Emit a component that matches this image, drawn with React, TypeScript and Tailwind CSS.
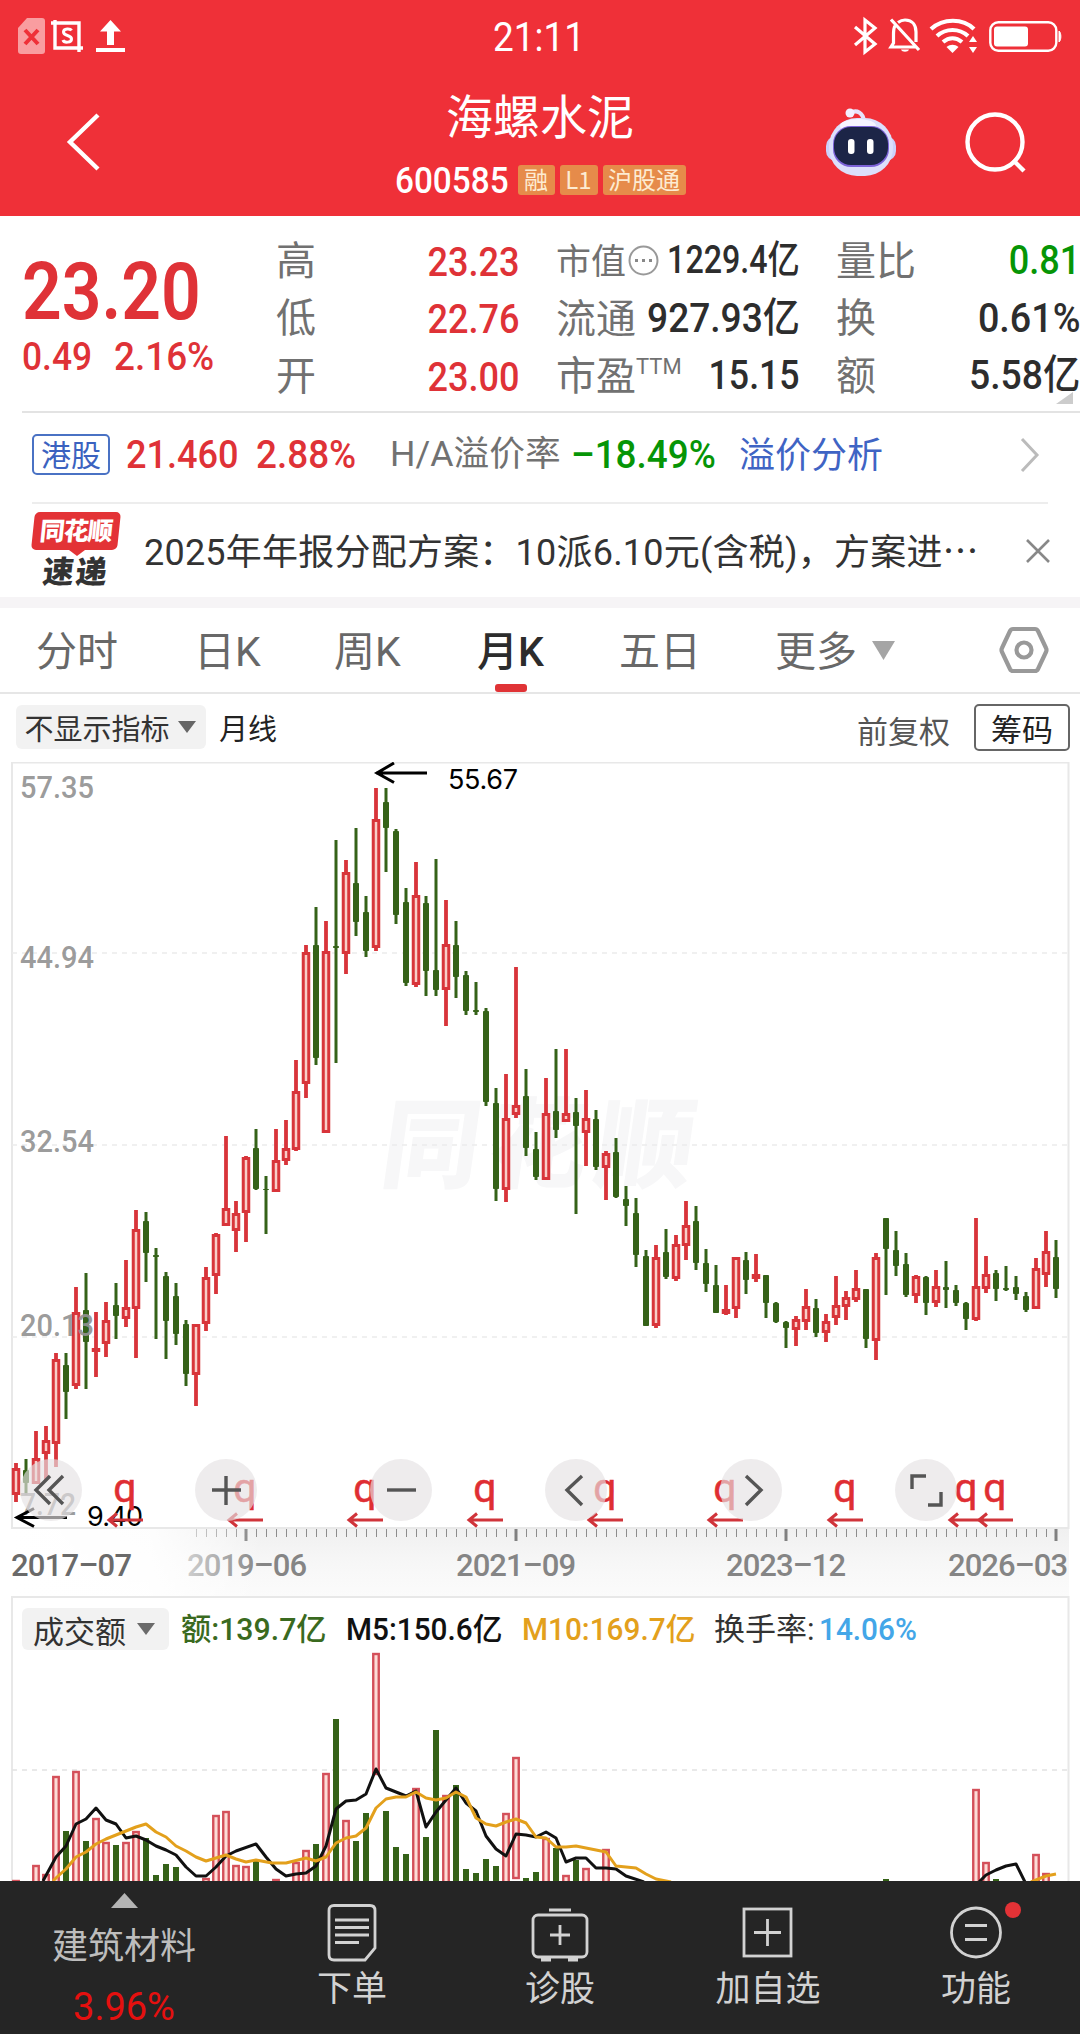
import type { ReactNode } from 'react';

// [rising, high, body top, body bottom, low] in chart units, one entry per month
const CANDLES = [
  [1, 1463, 1468, 1495, 1502], [0, 1459, 1470, 1483, 1495], [1, 1431, 1458, 1484, 1484], [1, 1426, 1440, 1454, 1480],
  [1, 1353, 1359, 1444, 1467], [0, 1353, 1365, 1392, 1419], [1, 1287, 1312, 1386, 1389], [0, 1273, 1310, 1342, 1389],
  [1, 1312, 1348, 1350, 1377], [1, 1302, 1320, 1344, 1357], [0, 1283, 1305, 1316, 1339], [1, 1260, 1307, 1319, 1327],
  [1, 1210, 1229, 1309, 1358], [0, 1212, 1221, 1253, 1282], [0, 1248, 1255, 1257, 1339], [0, 1272, 1276, 1321, 1359],
  [0, 1283, 1296, 1334, 1345], [0, 1320, 1324, 1374, 1386], [1, 1324, 1324, 1375, 1406], [1, 1267, 1277, 1324, 1331],
  [1, 1233, 1234, 1276, 1294], [1, 1136, 1208, 1226, 1226], [1, 1201, 1213, 1231, 1252], [1, 1156, 1157, 1213, 1242],
  [0, 1129, 1148, 1189, 1190], [0, 1176, 1189, 1190, 1234], [1, 1129, 1160, 1192, 1192], [1, 1120, 1148, 1161, 1165],
  [1, 1060, 1091, 1150, 1151], [1, 945, 952, 1084, 1098], [0, 907, 945, 1058, 1065], [1, 921, 951, 1133, 1133],
  [0, 840, 946, 948, 1063], [1, 860, 872, 954, 974], [0, 828, 883, 922, 936], [0, 896, 912, 951, 957],
  [1, 788, 819, 948, 951], [0, 788, 802, 828, 872], [0, 829, 831, 915, 924], [0, 888, 902, 983, 986],
  [1, 862, 895, 985, 987], [0, 896, 903, 971, 996], [0, 859, 970, 990, 996], [1, 900, 944, 990, 1026],
  [0, 921, 945, 977, 998], [0, 971, 975, 1011, 1015], [0, 982, 1010, 1012, 1015], [0, 1008, 1011, 1102, 1106],
  [0, 1088, 1103, 1189, 1201], [1, 1074, 1118, 1190, 1202], [1, 967, 1105, 1115, 1118], [0, 1069, 1096, 1148, 1156],
  [0, 1132, 1149, 1177, 1180], [1, 1078, 1113, 1180, 1180], [0, 1049, 1111, 1130, 1138], [1, 1049, 1113, 1122, 1122],
  [0, 1098, 1112, 1126, 1214], [1, 1090, 1118, 1133, 1166], [0, 1110, 1119, 1167, 1170], [1, 1151, 1153, 1168, 1200],
  [0, 1138, 1152, 1197, 1198], [0, 1186, 1199, 1206, 1226], [0, 1198, 1213, 1255, 1267], [0, 1250, 1256, 1326, 1326],
  [1, 1245, 1257, 1326, 1328], [0, 1229, 1252, 1277, 1279], [1, 1235, 1244, 1279, 1281], [1, 1201, 1225, 1246, 1260],
  [0, 1206, 1221, 1263, 1270], [0, 1249, 1263, 1284, 1292], [0, 1265, 1285, 1313, 1313], [1, 1285, 1309, 1314, 1315],
  [1, 1257, 1257, 1309, 1318], [0, 1252, 1260, 1280, 1294], [1, 1254, 1274, 1279, 1282], [0, 1275, 1275, 1303, 1318],
  [0, 1302, 1303, 1322, 1323], [0, 1321, 1322, 1328, 1348], [1, 1316, 1319, 1330, 1346], [1, 1289, 1306, 1322, 1330],
  [0, 1299, 1308, 1333, 1337], [1, 1314, 1321, 1333, 1342], [1, 1276, 1305, 1318, 1325], [1, 1291, 1297, 1307, 1320],
  [1, 1270, 1288, 1300, 1302], [0, 1289, 1289, 1339, 1348], [1, 1253, 1257, 1341, 1360], [0, 1218, 1218, 1249, 1295],
  [0, 1231, 1250, 1266, 1276], [0, 1253, 1264, 1295, 1297], [1, 1275, 1276, 1296, 1303], [0, 1276, 1277, 1303, 1315],
  [1, 1270, 1286, 1303, 1307], [0, 1261, 1287, 1290, 1308], [0, 1285, 1290, 1303, 1306], [0, 1302, 1303, 1319, 1330],
  [1, 1218, 1286, 1320, 1321], [1, 1256, 1274, 1289, 1293], [0, 1270, 1273, 1289, 1301], [0, 1266, 1288, 1290, 1291],
  [0, 1276, 1287, 1294, 1300], [0, 1292, 1296, 1310, 1312], [1, 1258, 1268, 1309, 1309], [1, 1231, 1251, 1275, 1287],
  [0, 1240, 1257, 1289, 1298],
];

// [month index, bar top]; colour follows the candle
const VOLUMES = [
  [0, 1880], [2, 1865], [3, 1874], [4, 1776], [5, 1831], [6, 1771], [7, 1841], [8, 1818], [9, 1842], [10, 1845],
  [11, 1842], [12, 1831], [13, 1838], [14, 1875], [15, 1864], [16, 1867], [19, 1878], [20, 1815], [21, 1811],
  [22, 1865], [23, 1866], [24, 1860], [26, 1879], [28, 1862], [29, 1850], [30, 1844], [31, 1773], [32, 1719],
  [33, 1820], [34, 1841], [35, 1813], [36, 1653], [37, 1811], [38, 1847], [39, 1854], [40, 1788], [41, 1837],
  [42, 1730], [43, 1795], [44, 1785], [45, 1869], [46, 1873], [47, 1859], [48, 1866], [49, 1813], [50, 1757],
  [51, 1878], [52, 1872], [53, 1838], [54, 1848], [55, 1875], [56, 1860], [57, 1868], [59, 1849], [87, 1879],
  [96, 1789], [97, 1862], [98, 1879], [102, 1854], [103, 1873],
];

const M5 =
  '43,1881 56,1857 66,1846 76,1824 86,1819 96,1808 106,1820 116,1824 126,1838 136,1836 146,1840 156,1846 166,1850 176,1855 186,1867 196,1876 206,1876 216,1867 226,1856 236,1851 256,1844 266,1857 276,1869 286,1876 296,1874 306,1873 316,1866 326,1846 336,1809 346,1801 356,1800 366,1794 376,1769 386,1788 396,1792 406,1796 416,1791 426,1827 436,1812 456,1788 466,1803 476,1811 486,1836 496,1849 506,1856 516,1834 526,1835 536,1837 546,1832 556,1838 566,1862 576,1858 586,1858 596,1868 606,1868 616,1869 626,1876 644,1882';
const M10 =
  '53,1881 57,1877 66,1869 76,1857 86,1852 96,1844 106,1839 116,1835 136,1827 146,1824 156,1832 166,1837 176,1846 186,1851 196,1857 206,1861 216,1858 226,1855 236,1859 246,1862 256,1860 272,1863 286,1863 306,1858 316,1861 326,1857 336,1843 346,1838 356,1836 366,1828 376,1808 386,1799 396,1797 406,1797 416,1792 426,1798 436,1800 446,1798 456,1792 466,1797 476,1818 486,1824 496,1826 506,1822 516,1819 526,1823 536,1837 546,1838 556,1847 566,1847 576,1846 586,1848 606,1852 616,1866 636,1868 646,1874 656,1879 671,1882';

const DIVIDENDS = [125, 245, 365, 485, 605, 725, 845, 966, 995];
const RED = '#d8343a';
const GREEN = '#356218';

function Num({ children, className = '' }: { children: ReactNode; className?: string }) {
  return (
    <span className={`inline-block shrink-0 whitespace-nowrap font-['Roboto','Noto_Sans_CJK_SC',sans-serif] ${className}`}>
      {children}
    </span>
  );
}

function StatusBar() {
  return (
    <div className="flex h-[72px] items-center justify-between pl-[18px] pr-[19px] text-white">
      <div className="flex w-[220px] items-center">
        <svg className="h-9 w-[27px]" viewBox="0 0 27 36">
          <path d="M9 0h15a3 3 0 013 3v30a3 3 0 01-3 3H3a3 3 0 01-3-3V10z" fill="#f99da0" />
          <path d="M7 12l13 14M20 12L7 26" stroke="#ef3038" strokeWidth="4" />
        </svg>
        <svg className="ml-1.5 h-8 w-8" viewBox="0 0 32 32" fill="none" stroke="#fff" strokeWidth="3.400">
          <path d="M0 3h28v29M4 0v28h28" />
          <path d="M20.500 10.500c-1-2-8-2.500-8 1.500 0 4.500 8 2.500 8 7 0 4-7.500 4-8.500 1" strokeWidth="3" />
        </svg>
        <svg className="ml-[13px] h-8 w-[29px]" viewBox="0 0 29 32" fill="#fff">
          <path d="M14.500 0L25 11.500h-7V25h-7V11.500H4zM0 28h29v4H0z" />
        </svg>
      </div>
      <Num className="scale-x-[0.9] pt-[3px] text-[41px] leading-none">21:11</Num>
      <div className="flex w-[220px] items-center justify-end">
        <svg className="h-[36px] w-6" viewBox="0 0 24 36" fill="none" stroke="#fff" strokeWidth="3.200">
          <path d="M2 9l20 17-10 8V2l10 8L2 27" />
        </svg>
        <svg className="ml-3 h-9 w-[32px]" viewBox="0 0 32 36" fill="none" stroke="#fff" strokeWidth="3.200">
          <path d="M6 8C4.500 10 4.500 13 4.500 17v8L2 29h25M9 4.500C11 3 13 2 16 2c8 0 11 6 11 12v10M2 1.500L30 32" />
          <path d="M12 31.500h8c-1 3-7 3-8 0z" fill="#fff" stroke="none" />
        </svg>
        <svg className="ml-2 h-[34px] w-12" viewBox="0 0 48 34" fill="none" stroke="#fff" strokeWidth="4.200">
          <path d="M2 10c12-11 32-11 43 0M8 17c9-8 22-8 31 0M14 23c6-5 13-5 19 0" />
          <path d="M17.500 28c4-3 8-3 12 0L23.500 34z" fill="#fff" stroke="none" />
          <path d="M44 17l4 6h-8zM44 34l4-6h-8z" fill="#fff" stroke="none" />
        </svg>
        <svg className="ml-3 h-[31px] w-[72px]" viewBox="0 0 72 31">
          <rect x="1.300" y="1.300" width="66" height="28.400" rx="8" fill="none" stroke="#fff" strokeWidth="2.400" />
          <rect x="5" y="5.500" width="34" height="20" rx="3" fill="#fff" />
          <path d="M70 10c2.500 2 2.500 9 0 11z" fill="#fff" stroke="#fff" />
        </svg>
      </div>
    </div>
  );
}

function Badge({ children, className }: { children: ReactNode; className: string }) {
  return (
    <span className={`flex h-[30px] items-center justify-center rounded-[3px] bg-[#e68b4a] pb-[2px] text-[24px] leading-none text-[#fdebd2] ${className}`}>
      {children}
    </span>
  );
}

function Header() {
  return (
    <header className="h-[216px] bg-[#ef3038] text-white">
      <StatusBar />
      <div className="flex h-[144px] justify-between">
        <div className="w-[395px] pl-[66px] pt-[41px]">
          <svg className="h-[58px] w-[34px]" viewBox="0 0 34 58" fill="none" stroke="#fff" strokeWidth="4.400">
            <path d="M32 2L4 29l28 27" />
          </svg>
        </div>
        <div className="flex flex-col items-center pt-[17px]">
          <div className="text-[47px] leading-[50px]">海螺水泥</div>
          <div className="mt-[25px] flex h-[32px] items-center">
            <Num className="w-[123px] origin-left scale-x-[0.9] text-[37px] font-medium leading-none">600585</Num>
            <Badge className="w-[37px]">融</Badge>
            <Badge className="ml-[5px] w-[38px]">L1</Badge>
            <Badge className="ml-[5px] w-[83px]">沪股通</Badge>
          </div>
        </div>
        <div className="flex w-[395px] justify-end pr-[53px] pt-[36px]">
          <svg className="h-[68px] w-[72px]" viewBox="0 0 72 68">
            <path d="M25 5c7-4 13 0 14 8" fill="none" stroke="#e6e2fb" strokeWidth="4" />
            <circle cx="25" cy="5" r="4.500" fill="#f3efff" />
            <rect x="1" y="28" width="70" height="25" rx="10" fill="#ccd0fa" />
            <rect x="4" y="10" width="64" height="58" rx="28" fill="#dcdffb" />
            <ellipse cx="33" cy="18" rx="18" ry="7" fill="#f6f4ff" />
            <rect x="8" y="18" width="56" height="41" rx="18" fill="#7c62d8" />
            <rect x="9" y="19" width="54" height="38" rx="17" fill="#1c2547" />
            <rect x="23" y="31" width="6.500" height="15" rx="3" fill="#fff" />
            <rect x="42" y="31" width="6.500" height="15" rx="3" fill="#fff" />
          </svg>
          <svg className="ml-[68px] mt-[5px] h-[60px] w-[62px]" viewBox="0 0 62 60" fill="none" stroke="#fff" strokeWidth="4.400">
            <circle cx="30" cy="29" r="27.500" />
            <path d="M48 47l11 11" />
          </svg>
        </div>
      </div>
    </header>
  );
}

function QuoteRow({ cells }: { cells: ReactNode[] }) {
  return (
    <div className="flex h-[57.500px] items-center text-[40px] leading-none text-[#717171]">
      <div className="w-10 pb-[6px]">{cells[0]}</div>
      <div className="w-[204px] text-right">{cells[1]}</div>
      <div className="ml-[36px] flex w-[122px] items-center whitespace-nowrap pb-[5px]">{cells[2]}</div>
      <div className="flex w-[122px] justify-end">{cells[3]}</div>
      <div className="ml-[36px] w-[90px] pb-[6px]">{cells[4]}</div>
      <div className="flex flex-1 justify-end">{cells[5]}</div>
    </div>
  );
}

function Quote() {
  const num = 'origin-right text-[41px] font-medium';
  return (
    <section className="relative flex h-[195px] pt-[16px]">
      <div className="w-[276px] pl-[22px] pt-[20px] text-[#df3237]">
        <Num className="block origin-left scale-x-[0.87] text-[80px] font-semibold leading-[80px]">23.20</Num>
        <div className="mt-[4px] flex text-[38px] leading-[42px]">
          <Num className="w-[92px] origin-left scale-x-[0.93] font-medium">0.49</Num>
          <Num className="origin-left scale-x-[0.97] font-medium">2.16%</Num>
        </div>
      </div>
      <div className="flex-1">
        <QuoteRow cells={['高', <Num className={`${num} scale-x-[0.88] text-[#df3237]`}>23.23</Num>,
          <><span className="text-[35px]">市值</span>
            <svg className="ml-0.5 mt-1 h-[31px] w-[31px]" viewBox="0 0 31 31"><circle cx="15.500" cy="15.500" r="14" fill="none" stroke="#999" strokeWidth="2" /><path d="M7 14h3v3H7zM14 14h3v3h-3zM21 14h3v3h-3z" fill="#888" /></svg></>,
          <Num className="origin-right scale-x-[0.825] text-[39px] font-medium text-[#2d2d2d]">1229.4亿</Num>, '量比',
          <Num className={`${num} scale-x-[0.88] text-[#069506]`}>0.81</Num>]} />
        <QuoteRow cells={['低', <Num className={`${num} scale-x-[0.88] text-[#df3237]`}>22.76</Num>, '流通',
          <Num className={`${num} scale-x-[0.905] text-[#2d2d2d]`}>927.93亿</Num>, '换', <Num className={`${num} scale-x-[0.92] text-[#2d2d2d]`}>0.61%</Num>]} />
        <QuoteRow cells={['开', <Num className={`${num} scale-x-[0.88] text-[#df3237]`}>23.00</Num>,
          <>市盈<Num className="self-start pt-[3px] text-[22px]">TTM</Num></>,
          <Num className={`${num} scale-x-[0.87] text-[#2d2d2d]`}>15.15</Num>, '额', <Num className={`${num} scale-x-[0.91] text-[#2d2d2d]`}>5.58亿</Num>]} />
      </div>
      <svg className="absolute bottom-[7px] right-[7px] h-3 w-[17px]" viewBox="0 0 17 12"><path d="M17 0v12H0z" fill="#ccc" /></svg>
    </section>
  );
}

function HkRow() {
  return (
    <section className="mx-8 flex h-[91px] items-center border-b-2 border-[#ededed] pb-[6px] text-[35px] leading-none">
      <span className="flex h-[41px] w-[78px] items-center justify-center rounded-[5px] border-2 border-[#4a72c4] pb-[4px] text-[30px] text-[#3b62c0]">港股</span>
      <Num className="ml-[16px] w-[130px] origin-left scale-x-[0.95] text-[38px] font-medium text-[#df3237]">21.460</Num>
      <Num className="w-[134px] origin-left scale-x-[0.97] text-[38px] font-medium text-[#df3237]">2.88%</Num>
      <Num className="w-[181px] origin-left scale-x-[1.02] text-[35px] text-[#717171]">H/A溢价率</Num>
      <Num className="w-[168px] origin-left scale-x-[0.97] text-[38px] font-medium text-[#069506]">–18.49%</Num>
      <span className="pb-[5px] text-[36px] text-[#3f64c4]">溢价分析</span>
      <svg className="ml-auto mr-[8px] h-9 w-5" viewBox="0 0 20 36" fill="none" stroke="#bbb" strokeWidth="3"><path d="M2 2l15 16L2 34" /></svg>
    </section>
  );
}

function NewsRow() {
  return (
    <section className="flex h-[93px] items-center pl-[33px] pr-[30px]">
      <div className="flex w-[111px] flex-col pb-[5px]">
        <span className="flex h-[38px] w-[86px] -skew-x-6 items-center justify-center rounded-[5px] bg-[#e33336] pb-[3px] text-[25px] font-black leading-none tracking-[-1px] text-white">同花顺</span>
        <svg className="ml-9 h-[6px] w-4" viewBox="0 0 16 6"><path d="M0 0h16L8 6z" fill="#e33336" /></svg>
        <span className="ml-[10px] -skew-x-6 text-[31px] font-black leading-[28px] tracking-[2px] text-[#333]">速递</span>
      </div>
      <p className="flex-1 overflow-hidden whitespace-nowrap font-['Roboto','Noto_Sans_CJK_SC',sans-serif] text-[36px] tracking-[0.22px] text-[#333]">
        2025年年报分配方案：10派6.10元(含税)，方案进<span className="font-['Noto_Sans_CJK_SC',sans-serif]">⋯</span>
      </p>
      <svg className="h-6 w-6" viewBox="0 0 24 24" stroke="#888" strokeWidth="2.600"><path d="M1 1l22 22M23 1L1 23" /></svg>
    </section>
  );
}

function Tabs() {
  return (
    <nav className="flex h-[86px] items-center border-b-2 border-[#e6e6e6] pl-[36px] pr-[31px] font-['Roboto','Noto_Sans_CJK_SC',sans-serif] text-[41px] leading-none text-[#686868]">
      <span className="w-[158px] pt-[5px]">分时</span>
      <span className="w-[140px] pt-[5px]">日K</span>
      <span className="w-[143px] pt-[5px]">周K</span>
      <span className="relative flex h-full w-[142px] items-center pt-[5px] font-medium text-[#2c2c2c]">
        月K
        <i className="absolute bottom-0 left-[18px] h-2 w-8 rounded-[3px] bg-[#e03336]" />
      </span>
      <span className="w-[156px] pt-[5px]">五日</span>
      <span className="pt-[5px]">更多</span>
      <svg className="ml-[15px] h-[19px] w-[23px]" viewBox="0 0 23 19"><path d="M0 0h23L11.500 19z" fill="#a5a5a5" /></svg>
      <svg className="ml-auto h-[46px] w-[50px]" viewBox="0 0 50 46" fill="none" stroke="#999" strokeWidth="4.200">
        <path d="M14 2h22q2 0 3 2l8 17q1 2 0 4l-8 17q-1 2-3 2H14q-2 0-3-2L3 25q-1-2 0-4l8-17q1-2 3-2z" />
        <circle cx="25" cy="23" r="7.500" />
      </svg>
    </nav>
  );
}

function Toolbar() {
  return (
    <div className="flex h-[68px] items-center pb-[2px] pl-4 pr-[10px] leading-none">
      <span className="flex h-11 w-[190px] items-center justify-center gap-[8px] rounded-md bg-[#f2f2f2] pr-[2px] text-[29px] text-[#333]">
        不显示指标
        <svg className="h-3 w-[18px]" viewBox="0 0 18 12"><path d="M0 0h18L9 12z" fill="#666" /></svg>
      </span>
      <span className="ml-[13px] text-[29px] text-[#222]">月线</span>
      <span className="ml-auto pt-1 text-[31px] text-[#555]">前复权</span>
      <span className="ml-[24px] flex h-[47px] w-24 items-center justify-center rounded-[5px] border-2 border-[#666] text-[31px] text-[#222]">筹码</span>
    </div>
  );
}

function ControlButton({ d }: { d: string }) {
  return (
    <button className="h-[62px] w-[62px] rounded-full bg-[#e5e2e4]/65">
      <svg className="h-[62px] w-[62px]" viewBox="-31 -31 62 62" fill="none" stroke="#555" strokeWidth="3.400"><path d={d} /></svg>
    </button>
  );
}

function PriceChart() {
  const labels: [string, number][] = [['57.35', 798], ['44.94', 968], ['32.54', 1152], ['20.13', 1336], ['7.72', 1515]];
  return (
    <section className="relative h-[767px]">
      <svg className="block h-[767px] w-[1080px]" viewBox="0 762 1080 767">
        <path d="M12 1528V762.500H1068.500V1528z" fill="none" stroke="#e8e8e8" strokeWidth="2" />
        <g transform="translate(378 1180) skewX(-8)">
          <text fontFamily="Noto Sans CJK SC" fontWeight="900" fontSize="98" fill="#f7f7f8" textLength="312">同花顺</text>
        </g>
        {[953, 1145, 1337].map(y => (
          <path key={y} d={`M12 ${y}H1068`} stroke="#ebebeb" strokeWidth="1.500" strokeDasharray="5 5" />
        ))}
        {CANDLES.map(([up, high, top, bottom, low], i) => {
          const x = 16 + i * 10;
          return up ? (
            <g key={i} stroke={RED} fill="none">
              <path d={`M${x} ${high}V${top}M${x} ${bottom}V${low}`} strokeWidth="3.800" />
              <rect x={x - 2.75} y={top + 1.5} width="5.500" height={Math.max(bottom - top - 3, 1)} strokeWidth="3" fill="#f9cdc8" />
            </g>
          ) : (
            <g key={i} fill={GREEN}>
              <rect x={x - 1.5} y={high} width="3" height={low - high} />
              <rect x={x - 3} y={top} width="6" height={bottom - top} rx="0.800" />
            </g>
          );
        })}
        {labels.map(([t, y]) => (
          <text key={t} x="20" y={y} textLength={t.length === 5 ? 74 : 56} lengthAdjust="spacingAndGlyphs" fontFamily="Roboto" fontWeight="500" fontSize="32" fill="#929292" fillOpacity="0.930">{t}</text>
        ))}
        <g stroke="#000" strokeWidth="3" fill="none">
          <path d="M427 773H376M394 763L377 773l17 9.500M67 1517.500H17M34 1508.500l-17 9 17 9" />
        </g>
        <g fontFamily="Inter" fontSize="27" fill="#000">
          <text x="448" y="789" textLength="70">55.67</text>
          <text x="87" y="1526" textLength="56">9.40</text>
        </g>
        {DIVIDENDS.map(x => (
          <g key={x}>
            <text x={x} y="1502" textAnchor="middle" fontFamily="Roboto" fontSize="41" fill="#df2e33" stroke="#df2e33" strokeWidth="0.500">q</text>
            <path d={`M${x + 18} 1520H${x - 16}M${x - 8} 1513.500L${x - 16} 1520l8 6.500`} fill="none" stroke="#d0343a" strokeWidth="3" />
          </g>
        ))}
      </svg>
      <div className="absolute left-[20px] top-[697px] flex gap-[113px]">
        <ControlButton d="M-1-14L-15 0-1 14M12-14L-2 0l14 14" />
        <ControlButton d="M-14 0H15M0-14V15" />
        <ControlButton d="M-14 0H15" />
        <ControlButton d="M6-14L-9 0 6 15" />
        <ControlButton d="M-5-14L10 0-5 15" />
        <ControlButton d="M-14-1V-14H0M2 15H15V2" />
      </div>
    </section>
  );
}

function TimeAxis() {
  const minor = Array.from({ length: 87 }, (_, i) => 196 + i * 10);
  const labels: [string, number][] = [['2019–06', 187], ['2021–09', 456], ['2023–12', 726], ['2026–03', 948]];
  return (
    <svg className="block h-[67px] w-[1080px]" viewBox="0 1529 1080 67">
      <defs>
        <linearGradient id="axisBg" x1="0" y1="0" x2="0" y2="1">
          <stop offset="0" stopColor="#f0f0f0" />
          <stop offset="0.500" stopColor="#f7f7f7" />
          <stop offset="1" stopColor="#fbfbfb" />
        </linearGradient>
        <linearGradient id="axisFade" x1="0" y1="0" x2="1" y2="0">
          <stop offset="0" stopColor="#fff" />
          <stop offset="0.550" stopColor="#fff" stopOpacity="0.900" />
          <stop offset="1" stopColor="#fff" stopOpacity="0" />
        </linearGradient>
      </defs>
      <rect x="12" y="1529" width="1057" height="68" fill="url(#axisBg)" />
      {minor.map(x => <path key={x} d={`M${x + 0.5} 1529v8`} stroke="#8c8c8c" strokeWidth="1" />)}
      {[246, 516, 786, 1056].map(x => <path key={x} d={`M${x} 1529v12`} stroke="#808080" strokeWidth="3" />)}
      <g fontFamily="Roboto" fontWeight="500" fontSize="31" fill="#858585">
        {labels.map(([t, x]) => <text key={t} x={x} y="1576" textLength="120">{t}</text>)}
        <rect x="12" y="1529" width="250" height="68" fill="url(#axisFade)" />
        <text x="11" y="1576" textLength="121" fill="#6a6a6a">2017–07</text>
      </g>
    </svg>
  );
}

function VolumeChart() {
  return (
    <section className="relative h-[285px]">
      <svg className="block h-[285px] w-[1080px]" viewBox="0 1596 1080 285">
        <path d="M12 1890V1597H1068.500V1890" fill="none" stroke="#e8e8e8" strokeWidth="2" />
        <path d="M12 1770H1068" stroke="#e2e2e2" strokeWidth="1.500" strokeDasharray="5 5" />
        {VOLUMES.map(([i, top]) => {
          const x = 16 + i * 10;
          return CANDLES[i][0] ? (
            <rect key={i} x={x - 2.75} y={top + 1} width="5.500" height="120" fill="#fddcd8" stroke="#d4505a" strokeWidth="2.400" />
          ) : (
            <rect key={i} x={x - 3} y={top} width="6" height="170" fill={GREEN} />
          );
        })}
        <g fill="none" strokeWidth="3" strokeLinejoin="round">
          <g stroke="#111">
            <polyline points={M5} />
            <polyline points="979,1882 986,1875 996,1870 1006,1866 1016,1864 1025,1882" />
          </g>
          <g stroke="#e3a01c">
            <polyline points={M10} />
            <polyline points="1031,1882 1046,1876 1056,1874" />
          </g>
        </g>
      </svg>
      <div className="absolute left-[22px] top-[12px] flex h-[42px] items-center text-[31px] leading-none">
        <span className="flex h-[42px] w-[147px] items-center justify-center gap-[11px] rounded-md bg-[#f2f2f2] pr-[3px] text-[#333]">
          成交额
          <svg className="h-3 w-[18px]" viewBox="0 0 18 12"><path d="M0 0h18L9 12z" fill="#6b6b6b" /></svg>
        </span>
        <Num className="ml-3 w-[165px] origin-left scale-x-[0.975] font-medium text-[#3a6a1f]">额:139.7亿</Num>
        <Num className="w-[176px] origin-left scale-x-[0.96] font-medium text-[#111]">M5:150.6亿</Num>
        <Num className="w-[192px] origin-left scale-x-[0.96] font-medium text-[#e3a01c]">M10:169.7亿</Num>
        <Num className="w-[105px] text-[#333]">换手率:</Num>
        <Num className="origin-left scale-x-[0.96] font-medium text-[#43a6e8]">14.06%</Num>
      </div>
    </section>
  );
}

function NavItem({ label, children }: { label: string; children: ReactNode }) {
  return (
    <div className="flex w-[208px] flex-col items-center pt-[22px]">
      <svg className="h-[60px] w-[60px]" viewBox="0 0 60 60" fill="none" stroke="#d2d2d2" strokeWidth="2.800">{children}</svg>
      <span className="mt-[5px] text-[35px] leading-9">{label}</span>
    </div>
  );
}

function BottomBar() {
  return (
    <footer className="flex h-[153px] bg-[#252525] text-[#d2d2d2]">
      <div className="flex w-[248px] flex-col items-center pt-3">
        <svg className="h-[15px] w-[27px]" viewBox="0 0 27 15"><path d="M13.500 0L27 15H0z" fill="#b4b4b4" /></svg>
        <span className="mt-[15px] text-[36px] leading-[40px] text-[#bdbdbd]">建筑材料</span>
        <Num className="mt-[23px] text-[38px] leading-[42px] text-[#e5100f]">3.96%</Num>
      </div>
      <NavItem label="下单">
        <path d="M12 2.500H48q5 0 5 5V45L43 57H12q-5 0-5-5V7.500q0-5 5-5z" />
        <path d="M13 17H47M13 24.500H47M13 32H47M13 39.500H37" />
      </NavItem>
      <NavItem label="诊股">
        <rect x="3" y="12" width="54" height="42" rx="5" />
        <path d="M19 7H41M30 22V42M20 32H40" />
        <path d="M11 56.500h10M38 56.500h10" strokeWidth="4" />
      </NavItem>
      <NavItem label="加自选">
        <rect x="6" y="6" width="47" height="47" />
        <path d="M29.500 16V43M16 29.500H43" />
      </NavItem>
      <NavItem label="功能">
        <circle cx="30" cy="29.500" r="24.500" />
        <path d="M19 22.500H41M19 36.500H41" />
        <circle cx="67" cy="7" r="8" fill="#e33236" stroke="none" />
      </NavItem>
    </footer>
  );
}

export default function App() {
  return (
    <main className="h-[2034px] w-[1080px] overflow-hidden bg-white font-['Noto_Sans_CJK_SC',sans-serif] [&_svg]:shrink-0 [&_svg]:overflow-visible [&_section_svg.block]:overflow-hidden">
      <Header />
      <Quote />
      <div className="ml-[22px] h-0.5 bg-[#e3e3e3]" />
      <HkRow />
      <NewsRow />
      <div className="h-[11px] bg-[#f6f4f6]" />
      <Tabs />
      <Toolbar />
      <PriceChart />
      <TimeAxis />
      <VolumeChart />
      <BottomBar />
    </main>
  );
}
